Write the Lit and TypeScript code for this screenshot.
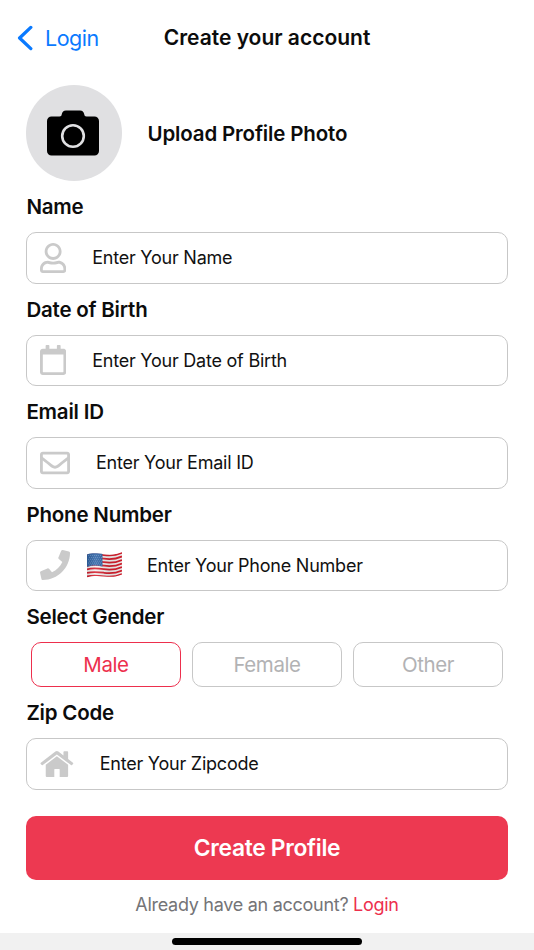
import { LitElement, html, css, svg, nothing } from "lit";
import { customElement, property, state } from "lit/decorators.js";
import { classMap } from "lit/directives/class-map.js";

const ICONS: Record<string, { width: number; path: string }> = {
  user: {
    width: 448,
    path: "M313.6 304c-28.7 0-42.5 16-89.6 16-47.1 0-60.8-16-89.6-16C60.2 304 0 364.2 0 438.4V464c0 26.5 21.5 48 48 48h352c26.5 0 48-21.5 48-48v-25.6c0-74.2-60.2-134.4-134.4-134.4zM400 464H48v-25.6c0-47.6 38.8-86.4 86.4-86.4 14.6 0 38.3 16 89.6 16 51.7 0 74.9-16 89.6-16 47.6 0 86.4 38.8 86.4 86.4V464zM224 288c79.5 0 144-64.5 144-144S303.5 0 224 0 80 64.5 80 144s64.5 144 144 144zm0-240c52.9 0 96 43.1 96 96s-43.1 96-96 96-96-43.1-96-96 43.1-96 96-96z",
  },
  calendar: {
    width: 448,
    path: "M400 64h-48V12c0-6.6-5.4-12-12-12h-40c-6.6 0-12 5.4-12 12v52H160V12c0-6.6-5.4-12-12-12h-40c-6.6 0-12 5.4-12 12v52H48C21.5 64 0 85.5 0 112v352c0 26.5 21.5 48 48 48h352c26.5 0 48-21.5 48-48V112c0-26.5-21.5-48-48-48zm-6 400H54c-3.3 0-6-2.7-6-6V160h352v298c0 3.3-2.7 6-6 6z",
  },
  envelope: {
    width: 512,
    path: "M464 64H48C21.49 64 0 85.49 0 112v288c0 26.51 21.49 48 48 48h416c26.51 0 48-21.49 48-48V112c0-26.51-21.49-48-48-48zm0 48v40.805c-22.422 18.259-58.168 46.651-134.587 106.49-16.841 13.247-50.201 45.072-73.413 44.701-23.208.375-56.579-31.459-73.413-44.701C106.18 199.465 70.425 171.067 48 152.805V112h416zM48 400V214.398c22.914 18.251 55.409 43.862 104.938 82.646 21.857 17.205 60.134 55.186 103.062 54.955 42.717.231 80.509-37.199 103.053-54.947 49.528-38.783 82.032-64.401 104.947-82.653V400H48z",
  },
  phone: {
    width: 512,
    path: "M493.4 24.6l-104-24c-11.3-2.6-22.9 3.3-27.5 13.9l-48 112c-4.2 9.8-1.4 21.3 6.9 28l60.6 49.6c-36 76.7-98.9 140.5-177.2 177.2l-49.6-60.6c-6.8-8.3-18.2-11.1-28-6.9l-112 48C3.9 366.5-2 378.1.6 389.4l24 104C27.1 504.2 36.7 512 48 512c256.1 0 464-207.5 464-464 0-11.2-7.7-20.9-18.6-23.4z",
  },
  home: {
    width: 576,
    path: "M14 236L262 43Q288 24 314 43L400 110V54Q400 40 414 40H466Q480 40 480 54V172L562 236Q572 244 564 254L546 274Q538 282 529 275L288 92L47 275Q38 282 30 274L12 254Q4 244 14 236ZM288 124L480 269V460Q480 478 462 478H336V350Q336 341 327 341H253Q244 341 244 350V478H116Q98 478 98 460V269Z",
  },
};

@customElement("us-flag")
export class UsFlag extends LitElement {
  static styles = css`
    :host { display: block; width: 35px; height: 26px; }
    svg { display: block; }
  `;

  // Wavy stripe centre line, shifted down from the top edge of the cloth.
  private edge(offset: number) {
    return `M0 ${offset + 2.4}C6 ${offset + 0.6} 10 ${offset + 1.2} 17 ${offset + 2.2}S29 ${offset + 2.6} 35 ${offset}`;
  }

  render() {
    const stripe = 23 / 13;
    const stars = [];
    for (let r = 0; r < 6; r++) {
      for (let c = 0; c < 7; c++) {
        stars.push(svg`<circle cx=${1.6 + c * 2 + (r % 2) * 0.8} cy=${3.4 + r * 1.9} r="0.42" fill="#a9c0df"/>`);
      }
    }
    return html`<svg width="35" height="26" viewBox="0 0 35 26">
      <defs>
        <clipPath id="cloth">
          <path d="M0 2.4C6 .6 10 1.2 17 2.2S29 2.6 35 0V22.6C29 25.2 24 25.2 17 24.4S6 23.6 0 25.4Z" />
        </clipPath>
        <linearGradient id="fold">
          <stop offset="0" stop-color="#000" stop-opacity=".12" />
          <stop offset=".25" stop-color="#fff" stop-opacity=".12" />
          <stop offset=".62" stop-color="#000" stop-opacity=".1" />
          <stop offset="1" stop-color="#000" stop-opacity=".05" />
        </linearGradient>
      </defs>
      <g clip-path="url(#cloth)">
        <rect width="35" height="26" fill="#f6f3f3" />
        ${[0, 1, 2, 3, 4, 5, 6].map(
          (i) => svg`<path d=${this.edge((i * 2 + 0.5) * stripe)} fill="none" stroke="#d8212f" stroke-width=${stripe}/>`
        )}
        <path d="M0 0H15.5V14.4C10 13.4 6 13.2 0 14.8Z" fill="#2f64a6" />
        ${stars}
        <rect width="35" height="26" fill="url(#fold)" />
      </g>
    </svg>`;
  }
}

@customElement("form-field")
export class FormField extends LitElement {
  @property() label = "";
  @property() icon = "";
  @property() hint = "";
  @property({ type: Boolean }) flag = false;

  static styles = css`
    :host { display: block; }
    .label {
      height: 51px;
      line-height: 51px;
      font-size: 20.5px;
      font-weight: 600;
      letter-spacing: -0.2px;
      color: #0c0c0c;
      padding-left: 0.4px;
    }
    .box {
      box-sizing: border-box;
      height: 51.5px;
      border: 1.35px solid #c7c7c7;
      border-radius: 10px;
      display: flex;
      align-items: center;
      padding-left: 13px;
      gap: 26px;
    }
    .icon { display: block; height: 30px; fill: #cacaca; flex: none; }
    .flag { margin: 0 -0.5px 0 -9.5px; }
    .hint { font-size: 18px; letter-spacing: -0.23px; color: #111; white-space: nowrap; }
  `;

  render() {
    const icon = ICONS[this.icon];
    return html`
      <div class="label">${this.label}</div>
      <div class="box">
        <svg class="icon" width=${(icon.width * 30) / 512} height="30" viewBox="0 0 ${icon.width} 512">
          <path d=${icon.path} />
        </svg>
        ${this.flag ? html`<us-flag class="flag"></us-flag>` : nothing}
        <span class="hint">${this.hint}</span>
      </div>
    `;
  }
}

@customElement("app-root")
export class AppRoot extends LitElement {
  @state() private gender = "Male";

  static styles = css`
    :host {
      display: flex;
      flex-direction: column;
      box-sizing: border-box;
      height: 950px;
      background: #fff;
      font-family: Inter, "Liberation Sans", sans-serif;
      color: #0c0c0c;
    }
    .nav {
      height: 75px;
      display: grid;
      grid-template-columns: 1fr auto 1fr;
      align-items: center;
      padding: 0 17px;
    }
    .back { display: flex; align-items: center; gap: 12px; color: #0a7aff; font-size: 21.5px; letter-spacing: -0.5px; }
    .back svg { display: block; }
    .title { font-size: 21px; font-weight: 600; white-space: nowrap; }
    .form { padding: 10px 26px 0; display: flex; flex-direction: column; }
    .upload { display: flex; align-items: center; gap: 26px; height: 96px; }
    .avatar {
      width: 95.5px;
      height: 95.5px;
      border-radius: 50%;
      background: #e0e0e2;
      display: flex;
      align-items: center;
      justify-content: center;
    }
    .camera { display: block; margin-right: 1.5px; }
    .upload-text { font-size: 20.5px; font-weight: 600; letter-spacing: -0.16px; }
    .label { height: 51px; line-height: 51px; font-size: 20.5px; font-weight: 600; letter-spacing: -0.2px; padding-left: 0.4px; }
    .genders { display: grid; grid-template-columns: repeat(3, 1fr); gap: 11px; padding: 0 5px; }
    .gender {
      box-sizing: border-box;
      height: 45px;
      border: 1.35px solid #c7c7c7;
      border-radius: 10px;
      background: none;
      font: 400 20.5px Inter, "Liberation Sans", sans-serif;
      letter-spacing: -0.4px;
      color: #b2b2b4;
      padding: 0;
    }
    .gender.on { color: #ed2f4d; border-color: #ed2f4d; }
    .submit {
      height: 64.5px;
      margin-top: 26px;
      border: 0;
      border-radius: 10px;
      background: #ed3951;
      color: #fff;
      font: 600 22.8px Inter, "Liberation Sans", sans-serif;
      letter-spacing: -0.3px;
      padding: 0 0 1.5px;
    }
    .footer {
      margin-top: 12.5px;
      height: 24px;
      line-height: 24px;
      text-align: center;
      font-size: 18px;
      letter-spacing: -0.28px;
      color: #747477;
    }
    .link { color: #ed2f4d; }
    .homebar {
      margin-top: auto;
      height: 17px;
      background: #f1f1f1;
      display: flex;
      justify-content: center;
      align-items: center;
    }
    .pill { width: 190px; height: 7px; margin-bottom: 1px; border-radius: 4px; background: #000; }
  `;

  render() {
    return html`
      <div class="nav">
        <div class="back">
          <svg width="16" height="26" viewBox="0 0 16 26">
            <path d="M13.8 2.4L2.6 13L13.8 23.6" fill="none" stroke="#0a7aff" stroke-width="3.3" stroke-linecap="round" stroke-linejoin="round" />
          </svg>
          <span class="back-text">Login</span>
        </div>
        <div class="title">Create your account</div>
      </div>
      <div class="form">
        <div class="upload">
          <div class="avatar">
            <svg class="camera" width="52" height="46" viewBox="0 0 52 46">
              <path d="M4.5 6.5H12.500C14 6.5 14.5 5.5 14.7 4.5C15.3 1.8 16.5 .5 19 .5H33C35.5 .5 36.7 1.8 37.3 4.5C37.5 5.5 38 6.5 39.5 6.5H47.5A4.500 4.500 0 0 1 52 11V41A4.500 4.500 0 0 1 47.500 45.500H4.500A4.500 4.500 0 0 1 0 41V11A4.500 4.500 0 0 1 4.500 6.500Z" />
              <circle cx="26" cy="26" r="10.8" fill="none" stroke="#e0e0e2" stroke-width="2.6" />
            </svg>
          </div>
          <div class="upload-text">Upload Profile Photo</div>
        </div>
        <form-field label="Name" icon="user" hint="Enter Your Name"></form-field>
        <form-field label="Date of Birth" icon="calendar" hint="Enter Your Date of Birth"></form-field>
        <form-field label="Email ID" icon="envelope" hint="Enter Your Email ID"></form-field>
        <form-field label="Phone Number" icon="phone" hint="Enter Your Phone Number" flag></form-field>
        <div class="label">Select Gender</div>
        <div class="genders">
          ${["Male", "Female", "Other"].map(
            (g) => html`<button class=${classMap({ gender: true, on: g === this.gender })} @click=${() => (this.gender = g)}>${g}</button>`
          )}
        </div>
        <form-field label="Zip Code" icon="home" hint="Enter Your Zipcode"></form-field>
        <button class="submit">Create Profile</button>
        <div class="footer">Already have an account? <span class="link">Login</span></div>
      </div>
      <div class="homebar"><div class="pill"></div></div>
    `;
  }
}
